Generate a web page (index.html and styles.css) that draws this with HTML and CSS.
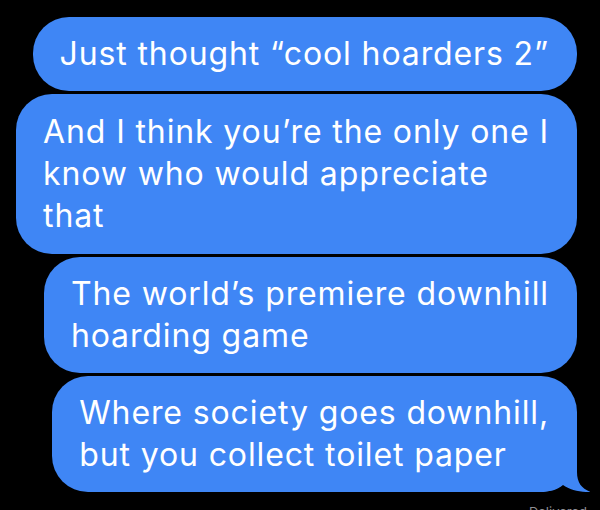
FILE: index.html
```html
<!DOCTYPE html>
<html>
<head>
<meta charset="utf-8">
<link rel="stylesheet" href="styles.css">
</head>
<body>
<div class="thread">
  <div class="bubble">Just thought “cool hoarders 2”</div>
  <div class="bubble tall">And I think you’re the only one I<br>know who would appreciate<br>that</div>
  <div class="bubble">The world’s premiere downhill<br>hoarding game</div>
  <div class="bubble last">Where society goes downhill,<br>but you collect toilet paper
    <svg class="tail" width="50" height="40" viewBox="0 0 50 40"><path d="M0,0 H37 V20 C37,31 42,37 51,40 C41,40.5 30,38 23,33 C17,38 9,40 0,40 Z" fill="#3f86f5"/></svg>
  </div>
  <div class="status">Delivered</div>
</div>
</body>
</html>
```
FILE: styles.css
```css
html, body {
  margin: 0;
  padding: 0;
  background: #000;
}
.thread {
  display: flex;
  flex-direction: column;
  align-items: flex-end;
  gap: 3px;
  padding: 17px 23px 0 0;
  font-family: "Inter", "Roboto", sans-serif;
}
.bubble {
  position: relative;
  background: #3f86f5;
  color: #fff;
  font-size: 32px;
  letter-spacing: 0.88px;
  line-height: 42px;
  padding: 16px 28px 16px 27px;
  border-radius: 36px;
  white-space: nowrap;
}
.tall {
  padding-top: 17px;
  padding-bottom: 17px;
}
.tail {
  position: absolute;
  right: -13px;
  bottom: 0;
  display: block;
}
.status {
  margin-top: 9px;
  margin-right: -10px;
  font-size: 13px;
  color: #8e8e93;
  line-height: 16px;
}
```
